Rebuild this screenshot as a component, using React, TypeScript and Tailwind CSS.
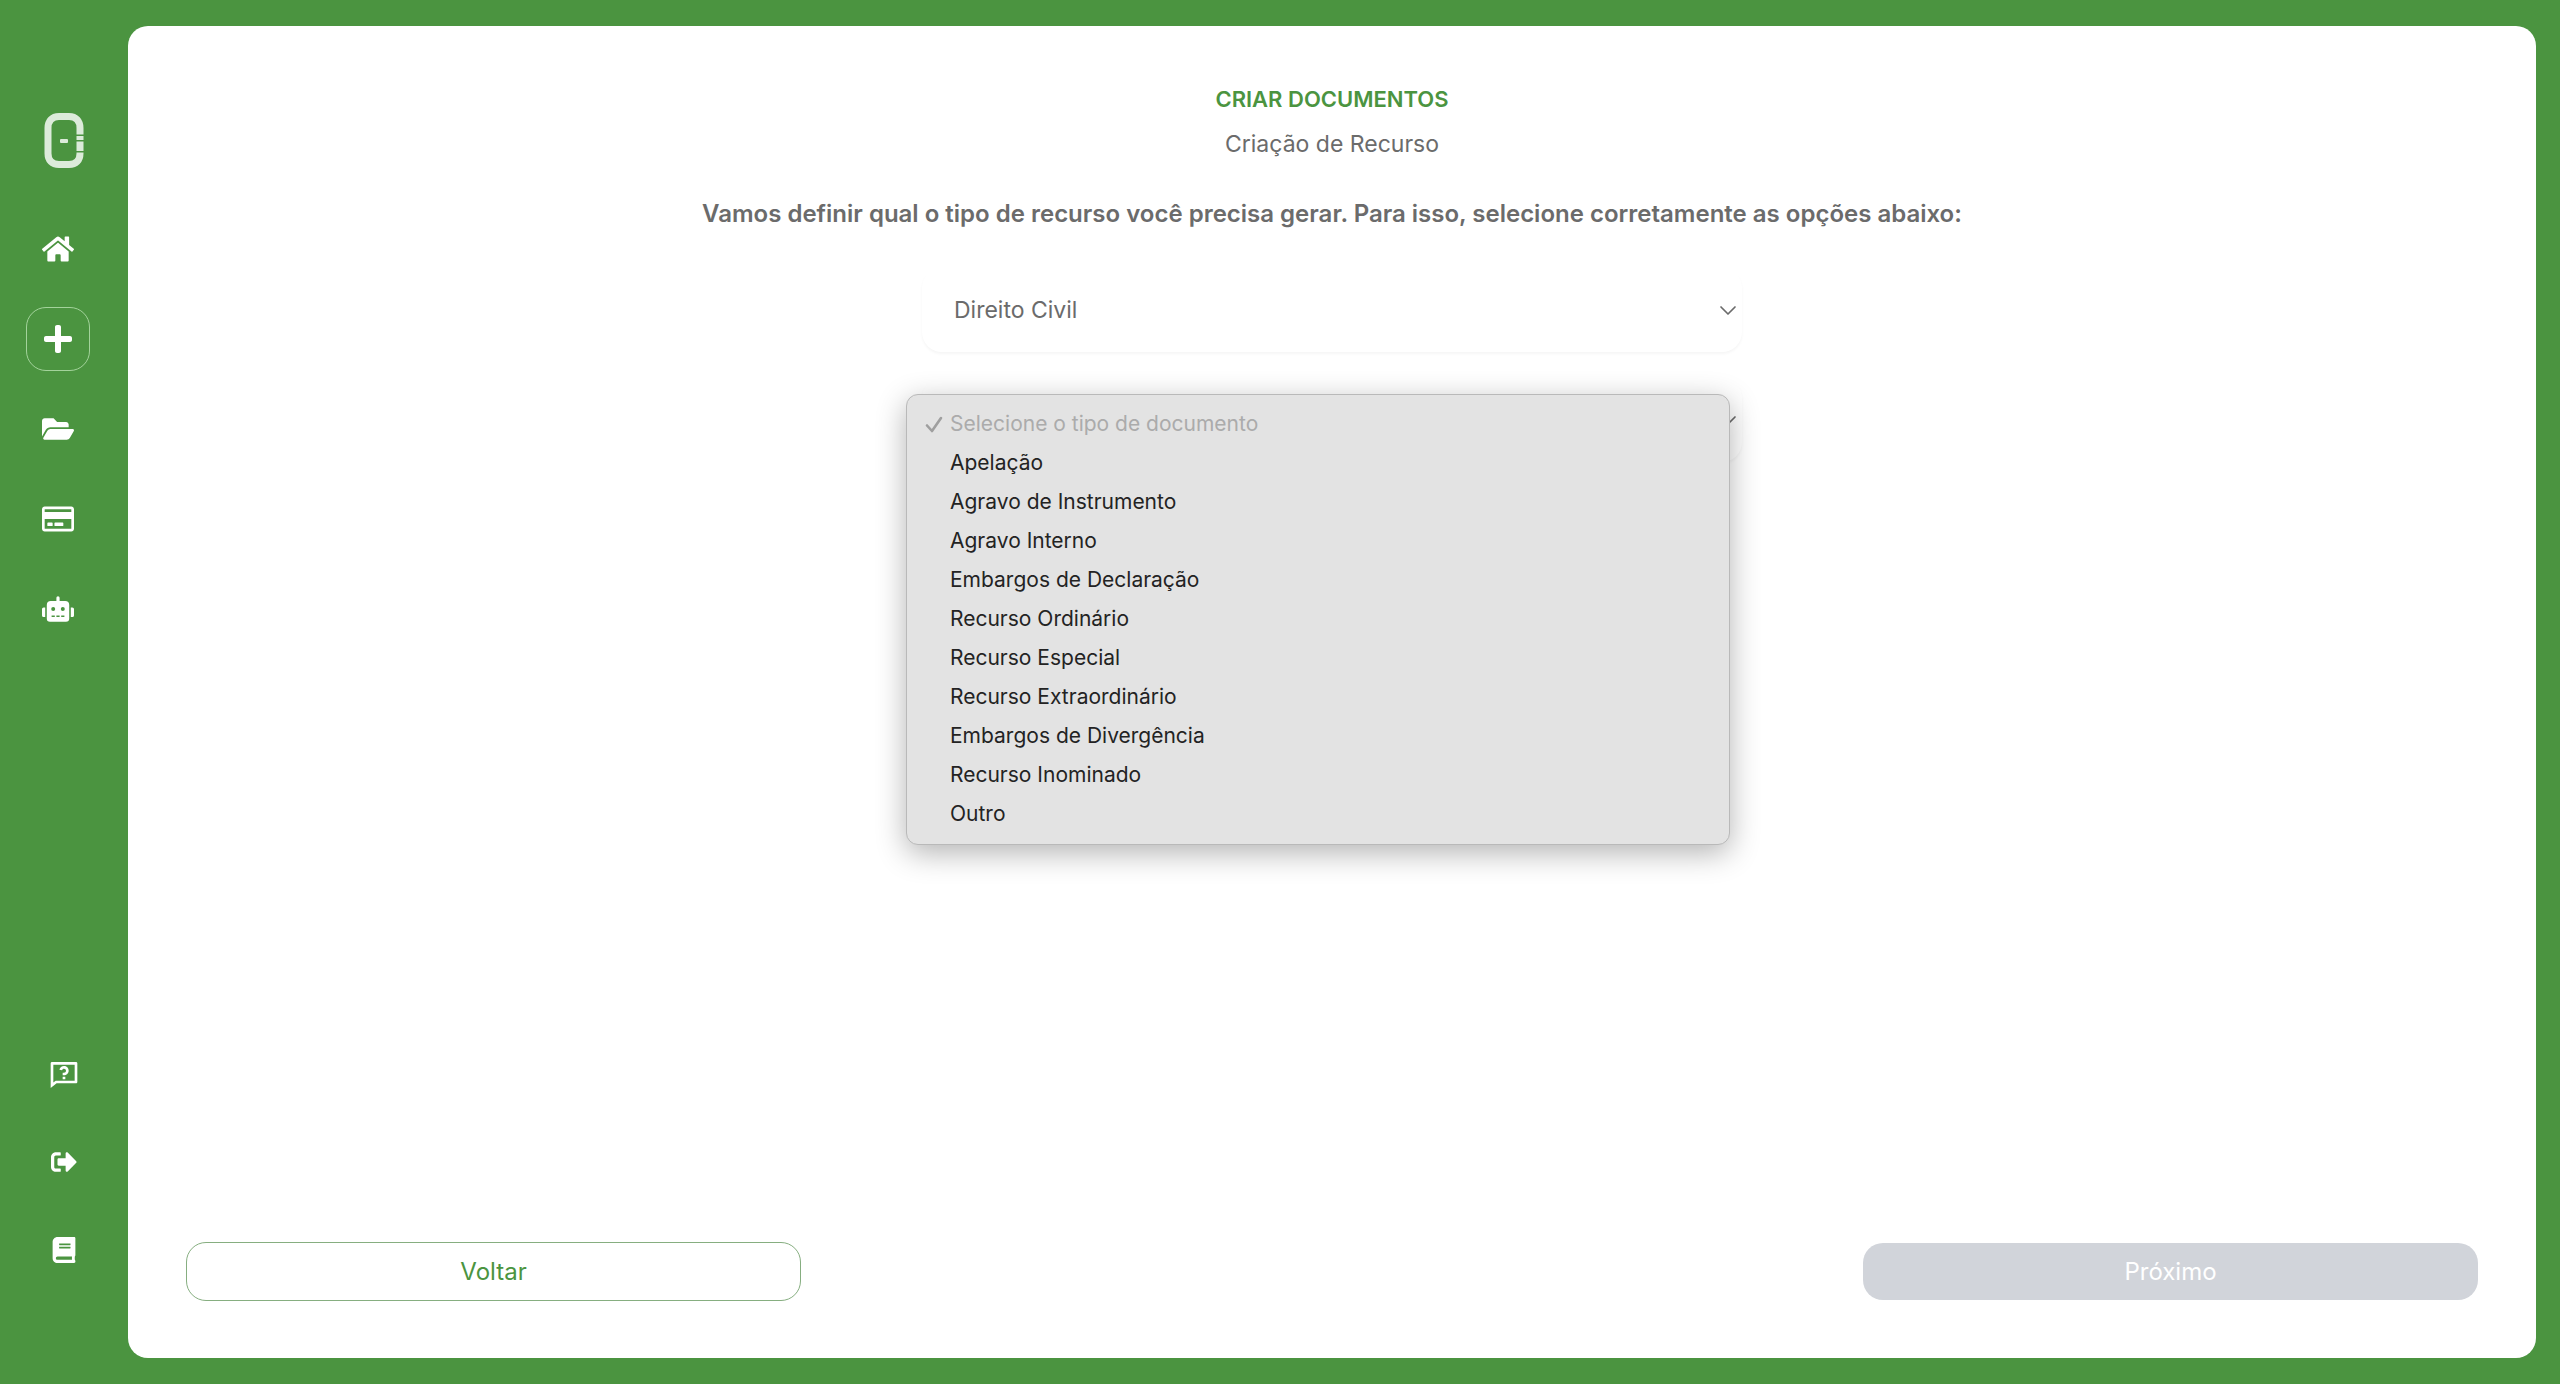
import { useState } from "react";
import {
  FaBook,
  FaFolderOpen,
  FaHome,
  FaPlus,
  FaRegCreditCard,
  FaRobot,
  FaSignOutAlt,
} from "react-icons/fa";
import { RiQuestionnaireLine } from "react-icons/ri";

const documentTypes = [
  "Apelação",
  "Agravo de Instrumento",
  "Agravo Interno",
  "Embargos de Declaração",
  "Recurso Ordinário",
  "Recurso Especial",
  "Recurso Extraordinário",
  "Embargos de Divergência",
  "Recurso Inominado",
  "Outro",
];

const mainLinks = [
  { label: "Início", icon: FaHome, active: false },
  { label: "Criar documentos", icon: FaPlus, active: true },
  { label: "Meus documentos", icon: FaFolderOpen, active: false },
  { label: "Pagamentos", icon: FaRegCreditCard, active: false },
  { label: "Assistente", icon: FaRobot, active: false },
];

const footerLinks = [
  { label: "Ajuda", icon: RiQuestionnaireLine, size: 32 },
  { label: "Sair", icon: FaSignOutAlt, size: 26 },
  { label: "Manual", icon: FaBook, size: 26 },
];

function Logo() {
  return (
    <svg width="40" height="56" viewBox="0 0 40 56" fill="none" aria-hidden="true">
      <path
        d="M36 21.5V15C36 8 32 3.500 25 3.500H15C8 3.500 4 8 4 15V40.500C4 47.500 8 51.500 15 51.500H25C32 51.500 36 47.500 36 40.500V39.500"
        stroke="#dcebda"
        strokeWidth="7"
      />
      <path d="M32.5 23H39.5V27H32.5ZM32.5 28.500H39.5V38H32.5Z" fill="#dcebda" />
      <rect x="16" y="26" width="8" height="4" rx="1" fill="#dcebda" />
    </svg>
  );
}

function Chevron() {
  return (
    <svg
      className="pointer-events-none absolute right-1 top-1/2 -translate-y-1/2"
      width="20"
      height="20"
      viewBox="0 0 20 20"
      fill="none"
      stroke="#6b6b6b"
      strokeWidth="1.7"
      strokeLinecap="round"
      strokeLinejoin="round"
      aria-hidden="true"
    >
      <path d="M3 7L10 14L17 7" />
    </svg>
  );
}

const selectClass =
  "h-21 w-full appearance-none rounded-[20px] bg-white pl-8 pr-12 text-[23px] text-[#6b6b6b] shadow-[0_2px_3px_rgba(0,0,0,0.04)] outline-none";

export default function App() {
  const [area, setArea] = useState("Direito Civil");
  const [type, setType] = useState("");
  const [open, setOpen] = useState(true);

  return (
    <div className="flex min-h-screen bg-[#4b9440] py-[26px] pr-6 font-['Inter',sans-serif]">
      <aside className="flex w-32 shrink-0 flex-col justify-between pb-23 pt-[87px]">
        <nav className="flex flex-col gap-[26px]">
          <a href="#" aria-label="Página inicial" className="mb-[22px] ml-11">
            <Logo />
          </a>
          {mainLinks.map(({ label, icon: Icon, active }) => (
            <a
              key={label}
              href="#"
              aria-label={label}
              className={`ml-[26px] flex size-16 items-center justify-center rounded-[20px] border text-white ${
                active ? "border-[#a3d39b]" : "border-transparent"
              }`}
            >
              <Icon size={32} />
            </a>
          ))}
        </nav>
        <div className="flex flex-col items-center gap-14">
          {footerLinks.map(({ label, icon: Icon, size }) => (
            <a key={label} href="#" aria-label={label} className="flex h-8 items-center text-white">
              <Icon size={size} />
            </a>
          ))}
        </div>
      </aside>

      <main className="flex flex-1 flex-col justify-between rounded-[20px] bg-white px-[58px] pb-[57px] pt-[55px]">
        <div className="flex flex-col items-center text-center text-[#6b6b6b]">
          <h1 className="text-[22px] font-semibold leading-9 text-[#4b9440]">CRIAR DOCUMENTOS</h1>
          <p className="mt-[9px] text-[23px] leading-9">Criação de Recurso</p>
          <p className="mt-[34px] text-2xl font-semibold leading-9">
            Vamos definir qual o tipo de recurso você precisa gerar. Para isso, selecione corretamente as opções abaixo:
          </p>

          <div className="mt-9 flex w-full max-w-[820px] flex-col gap-[26px] text-left">
            <div className="relative">
              <select
                aria-label="Área do direito"
                value={area}
                onChange={(e) => setArea(e.target.value)}
                className={selectClass}
              >
                <option>Direito Civil</option>
              </select>
              <Chevron />
            </div>

            <div className="relative">
              <select
                aria-label="Tipo de documento"
                value={type}
                onChange={(e) => setType(e.target.value)}
                onClick={() => setOpen(true)}
                className={selectClass}
              >
                <option value="" />
                {documentTypes.map((item) => (
                  <option key={item}>{item}</option>
                ))}
              </select>
              <Chevron />

              {open && (
                <ul
                  role="listbox"
                  aria-label="Tipo de documento"
                  className="absolute -left-4 right-3 top-4 z-10 rounded-xl border border-[#b9b9b9] bg-[#e3e3e3] pb-[11px] pt-[9px] text-[21px] leading-[39px] text-[#232323] shadow-[0_8px_30px_rgba(0,0,0,0.3)]"
                >
                  <li role="option" aria-selected={type === ""} className="flex items-center pl-[18px] text-[#ababab]">
                    <svg
                      className="mr-[7px]"
                      width="18"
                      height="18"
                      viewBox="0 0 18 18"
                      fill="none"
                      stroke="#9f9f9f"
                      strokeWidth="2.6"
                      strokeLinecap="round"
                      strokeLinejoin="round"
                      aria-hidden="true"
                    >
                      <path d="M2 10.5L7 16L16 3" />
                    </svg>
                    Selecione o tipo de documento
                  </li>
                  {documentTypes.map((item) => (
                    <li
                      key={item}
                      role="option"
                      aria-selected={type === item}
                      className="cursor-default pl-[43px]"
                      onClick={() => {
                        setType(item);
                        setOpen(false);
                      }}
                    >
                      {item}
                    </li>
                  ))}
                </ul>
              )}
            </div>
          </div>
        </div>

        <div className="flex items-center justify-between text-2xl">
          <button type="button" className="h-[59px] w-[615px] rounded-[20px] border border-[#86ae80] text-[#4b9440]">
            Voltar
          </button>
          <button type="button" disabled={type === ""} className="h-[57px] w-[615px] rounded-[20px] bg-[#d1d4da] text-white">
            Próximo
          </button>
        </div>
      </main>
    </div>
  );
}
